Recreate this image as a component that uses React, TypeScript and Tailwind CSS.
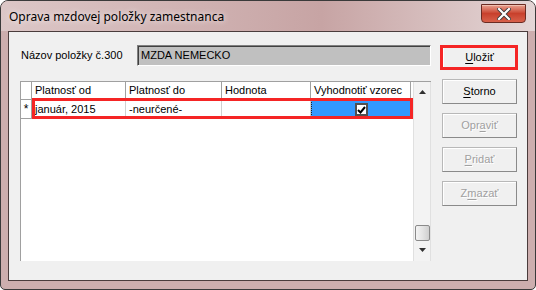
import React from "react";

const F = { fontFamily: '"Liberation Sans", Arial, sans-serif' };

function Btn({ pre, u, post, disabled }: { pre: string; u: string; post: string; disabled?: boolean }) {
  return (
    <div
      className={`h-[25px] w-[75px] flex items-center justify-center border border-t-[#b8b8b8] border-l-[#b8b8b8] border-r-[#8a8a8a] border-b-[#8a8a8a] bg-[#f0f0f0] shadow-[inset_1px_1px_0_#ffffff] text-[11px] ${
        disabled ? "text-[#a0a0a0] [text-shadow:1px_1px_0_#ffffff]" : "text-black"
      }`}
      style={F}
    >
      <span>
        {pre}
        <span className="underline underline-offset-[2px]">{u}</span>
        {post}
      </span>
    </div>
  );
}

export default function App() {
  return (
    <div className="w-[536px] h-[290px] bg-white overflow-hidden">
      <div className="w-[536px] h-[290px] rounded-t-[8px] rounded-b-[5px] border border-[#3a3a3a] bg-[#cdaeae] flex flex-col px-[7px] pb-[8px]">
        {/* Title bar */}
        <div className="h-[30px] -mx-[7px] px-[7px] rounded-t-[7px] flex items-start relative bg-gradient-to-r from-[#dcc7c7] via-[#c7a4a4] via-60% to-[#e4d6d6]">
          <div
            className="mt-[8px] ml-[1px] text-[12px] leading-[16px] text-black [text-shadow:0_0_6px_#ffffff]"
            style={{ fontFamily: '"Noto Sans", "Open Sans", sans-serif' }}
          >
            Oprava mzdovej položky zamestnanca
          </div>
          <div className="ml-auto mr-[2px] mt-[3px] w-[45px] h-[19px] rounded-b-[4px] border border-[#6b2b22] bg-gradient-to-b from-[#e8a090] via-[#c8402c] to-[#d8604a] flex items-center justify-center shadow-[inset_0_1px_0_#f0c0b0]">
            <svg width="14" height="12" viewBox="0 0 14 12">
              <path d="M2 1 L12 11 M12 1 L2 11" stroke="#3a3a3a" strokeWidth="4" strokeLinecap="square" />
              <path d="M2 1 L12 11 M12 1 L2 11" stroke="#ffffff" strokeWidth="2.2" strokeLinecap="square" />
            </svg>
          </div>
        </div>
        {/* Client area */}
        <div className="flex-1 border border-[#4a3c3c] bg-[#f0f0f0] flex pl-[11px] pt-[13px]" style={F}>
          <div className="w-[411px] flex flex-col">
            <div className="flex items-center h-[21px]">
              <div className="w-[117px] pl-[1px] text-[11px] text-black">Názov položky č.300</div>
              <div className="w-[294px] h-[21px] border border-t-[#808080] border-l-[#808080] border-r-[#ffffff] border-b-[#ffffff] bg-[#c0c0c0] flex items-center pl-[3px] text-[11px] text-black shadow-[inset_1px_1px_0_#404040]">
                MZDA NEMECKO
              </div>
            </div>
            <div className="mt-[15px] h-[180px] flex border-l border-t border-[#a0a0a0] bg-white relative">
              <div className="flex-1 flex flex-col">
                <div className="grid grid-cols-[11px_94px_96px_89px_100px] h-[18px] text-[11px] text-black">
                  <div className="border-r border-b border-[#a0a0a0]" />
                  <div className="border-r border-b border-[#a0a0a0] pl-[3px] leading-[17px]">Platnosť od</div>
                  <div className="border-r border-b border-[#a0a0a0] pl-[3px] leading-[17px]">Platnosť do</div>
                  <div className="border-r border-b border-[#a0a0a0] pl-[3px] leading-[17px]">Hodnota</div>
                  <div className="border-r border-b border-[#a0a0a0] pl-[3px] leading-[17px]">Vyhodnotiť vzorec</div>
                </div>
                <div className="grid grid-cols-[11px_94px_96px_89px_100px] h-[19px] text-[11px] text-black">
                  <div className="border-r border-b border-[#a0a0a0] flex items-center justify-center text-[12px] leading-none">*</div>
                  <div className="border-r border-b border-[#d0d0d0] pl-[3px] leading-[18px]">január, 2015</div>
                  <div className="border-r border-b border-[#d0d0d0] pl-[3px] leading-[18px]">-neurčené-</div>
                  <div className="border-r border-b border-[#d0d0d0]" />
                  <div className="border border-dotted border-[#202020] bg-[#3399ff] flex items-center justify-center">
                    <div className="w-[13px] h-[13px] border-2 border-[#505050] bg-white flex items-center justify-center">
                      <svg width="9" height="8" viewBox="0 0 9 8">
                        <path d="M1 4 L3.5 6.5 L8 1" stroke="#000" strokeWidth="2" fill="none" />
                      </svg>
                    </div>
                  </div>
                </div>
              </div>
              {/* scrollbar */}
              <div className="w-[18px] border-l border-r border-[#e0e0e0] bg-[#f3f3f3] flex flex-col items-center">
                <div className="h-[16px] flex items-center justify-center mt-[2px]">
                  <svg width="7" height="4" viewBox="0 0 7 4">
                    <path d="M0 4 L3.5 0 L7 4 Z" fill="#303030" />
                  </svg>
                </div>
                <div className="flex-1" />
                <div className="w-[15px] h-[16px] border border-[#8a8a8a] rounded-[2px] bg-gradient-to-r from-[#f4f4f4] via-[#e4e4e4] to-[#cfcfcf]" />
                <div className="h-[18px] flex items-center justify-center mb-[2px]">
                  <svg width="7" height="4" viewBox="0 0 7 4">
                    <path d="M0 0 L7 0 L3.5 4 Z" fill="#303030" />
                  </svg>
                </div>
              </div>
              {/* red annotation */}
              <div className="absolute left-[11px] top-[16px] w-[381px] h-[21px] border-[3px] border-[#f52525] pointer-events-none" />
            </div>
          </div>
          <div className="ml-[11px] w-[75px] flex flex-col gap-[9px]">
            <div className="relative">
              <Btn pre="" u="U" post="ložiť" />
              <div className="absolute -left-[2px] -right-[1px] top-0 bottom-0 border-[3px] border-[#f52525] pointer-events-none" />
            </div>
            <Btn pre="" u="S" post="torno" />
            <Btn pre="Opr" u="a" post="viť" disabled />
            <Btn pre="" u="P" post="ridať" disabled />
            <Btn pre="Z" u="m" post="azať" disabled />
          </div>
        </div>
      </div>
    </div>
  );
}
